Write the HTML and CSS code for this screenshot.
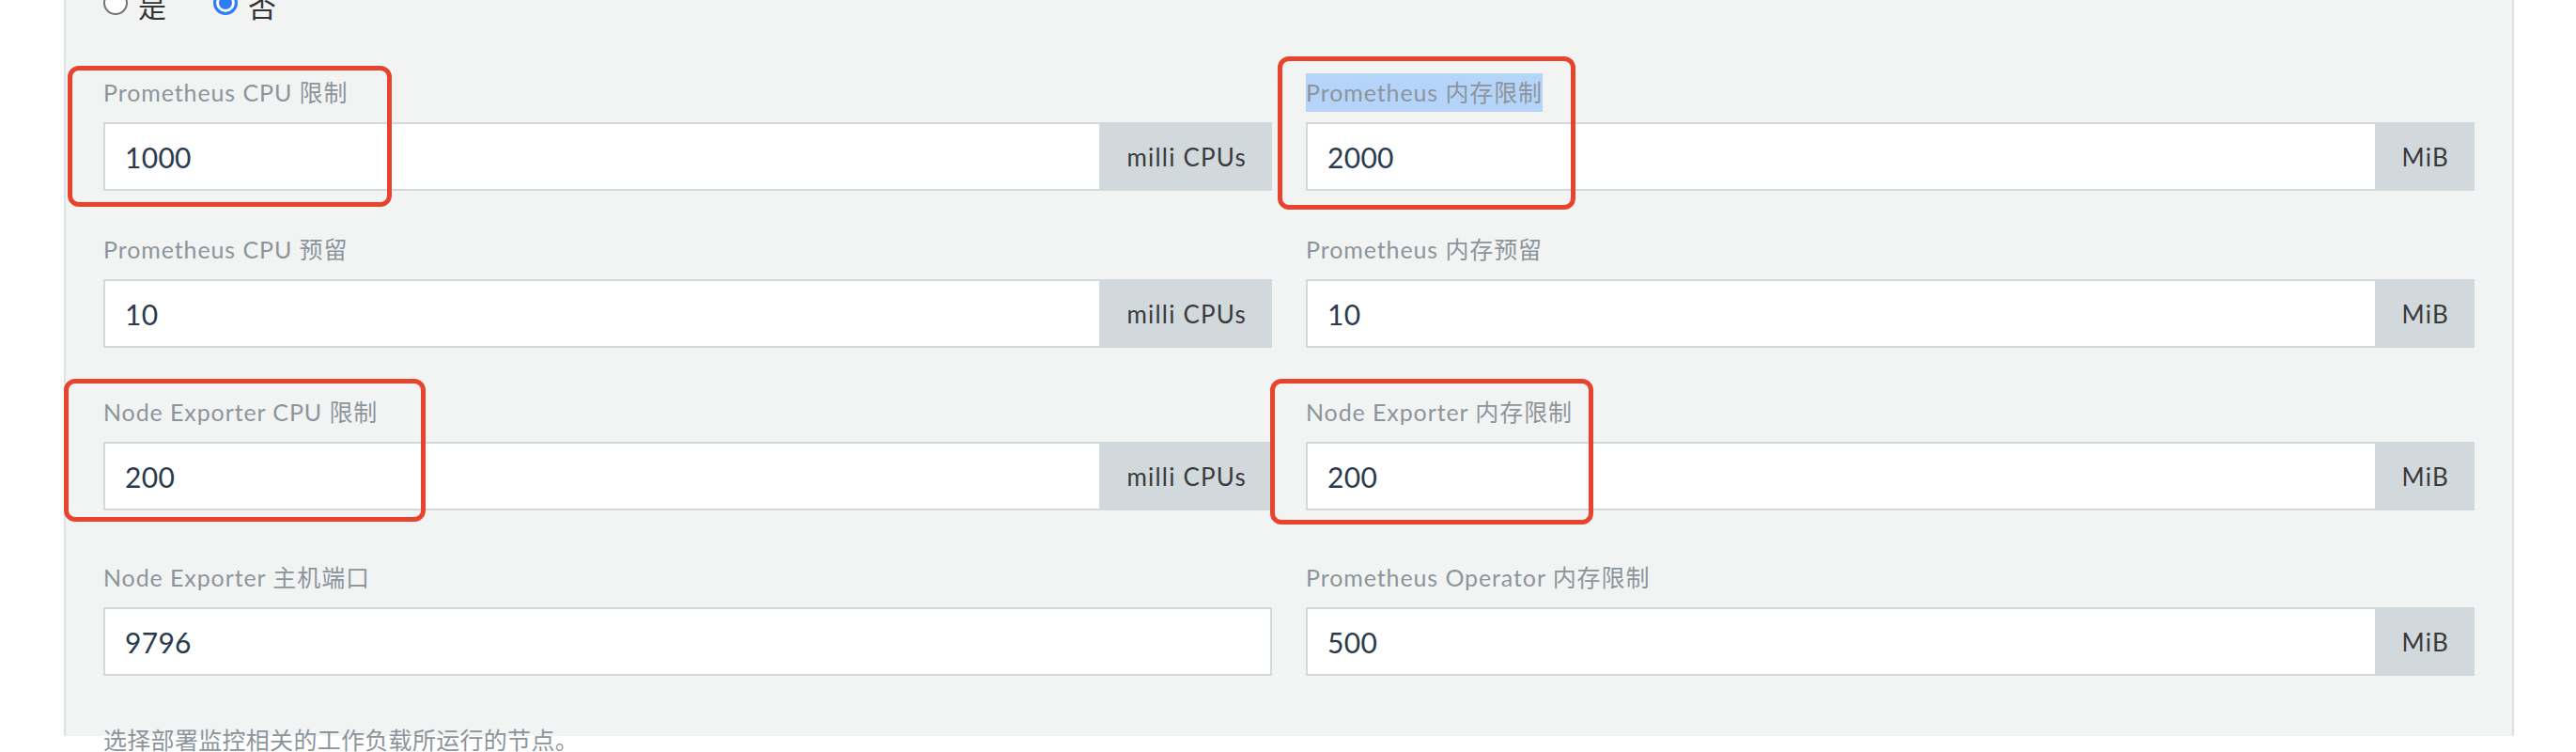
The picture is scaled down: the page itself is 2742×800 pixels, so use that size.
FILE: index.html
```html
<!DOCTYPE html>
<html lang="zh-CN">
<head>
<meta charset="utf-8">
<title>监控配置</title>
<link rel="stylesheet" href="styles.css">
</head>
<body>
<div class="page">
  <div class="panel">
    <div class="radio-row">
      <label class="radio"><span class="dot"></span><span class="radio-text">是</span></label>
      <label class="radio checked"><span class="dot"></span><span class="radio-text">否</span></label>
    </div>

    <div class="row row-1">
      <div class="field">
        <div class="label">Prometheus CPU 限制</div>
        <div class="input-group"><div class="input">1000</div><div class="addon">milli CPUs</div></div>
      </div>
      <div class="field">
        <div class="label"><span class="selected">Prometheus 内存限制</span></div>
        <div class="input-group"><div class="input">2000</div><div class="addon">MiB</div></div>
      </div>
    </div>

    <div class="row row-2">
      <div class="field">
        <div class="label">Prometheus CPU 预留</div>
        <div class="input-group"><div class="input">10</div><div class="addon">milli CPUs</div></div>
      </div>
      <div class="field">
        <div class="label">Prometheus 内存预留</div>
        <div class="input-group"><div class="input">10</div><div class="addon">MiB</div></div>
      </div>
    </div>

    <div class="row row-3">
      <div class="field">
        <div class="label">Node Exporter CPU 限制</div>
        <div class="input-group"><div class="input">200</div><div class="addon">milli CPUs</div></div>
      </div>
      <div class="field">
        <div class="label">Node Exporter 内存限制</div>
        <div class="input-group"><div class="input">200</div><div class="addon">MiB</div></div>
      </div>
    </div>

    <div class="row row-4">
      <div class="field">
        <div class="label">Node Exporter 主机端口</div>
        <div class="input-group"><div class="input">9796</div></div>
      </div>
      <div class="field">
        <div class="label">Prometheus Operator 内存限制</div>
        <div class="input-group"><div class="input">500</div><div class="addon">MiB</div></div>
      </div>
    </div>

    <p class="help">选择部署监控相关的工作负载所运行的节点。</p>
  </div>

  <div class="mark mark-1"></div>
  <div class="mark mark-2"></div>
  <div class="mark mark-3"></div>
  <div class="mark mark-4"></div>
</div>
</body>
</html>
```

FILE: styles.css
```css
html, body {
  margin: 0;
  padding: 0;
  background: #ffffff;
}

body {
  font-family: "Lato", "Noto Sans CJK SC", sans-serif;
  overflow: hidden;
}

.page {
  position: relative;
  width: 2742px;
  height: 800px;
  overflow: hidden;
}

.panel {
  margin-left: 68px;
  width: 2608px;
  height: 800px;
  box-sizing: border-box;
  background: #f2f4f4;
  border-left: 2px solid #dde2e5;
  border-right: 2px solid #dde2e5;
  padding: 0 40px;
}

/* radio buttons */
.radio-row {
  display: flex;
  align-items: center;
  height: 40px;
  margin-top: -17px;
  gap: 50px;
}

.radio {
  display: flex;
  align-items: center;
  gap: 11px;
  font-size: 30px;
  color: #333333;
}

.radio-text {
  padding-top: 4px;
}

.dot {
  width: 26px;
  height: 26px;
  box-sizing: border-box;
  border-radius: 50%;
  border: 2px solid #747474;
  background: #ffffff;
}

.radio.checked .dot {
  border: 3px solid #2f7df6;
  background: #2f7df6;
  box-shadow: inset 0 0 0 3px #ffffff;
}

/* form rows */
.row {
  display: grid;
  grid-template-columns: 1fr 1fr;
  column-gap: 36px;
}

.row-1 { margin-top: 55px; }
.row-2 { margin-top: 42px; }
.row-3 { margin-top: 48px; }
.row-4 { margin-top: 51px; }

.label {
  height: 41px;
  line-height: 41px;
  font-size: 25px;
  letter-spacing: 0.9px;
  color: #8d959b;
  margin-bottom: 11px;
  white-space: nowrap;
}

.selected {
  display: inline-block;
  height: 41px;
  background: #b4d4fa;
}

.input-group {
  display: flex;
  height: 73px;
}

.input {
  flex: 1;
  display: flex;
  align-items: center;
  box-sizing: border-box;
  background: #ffffff;
  border: 2px solid #d3dadd;
  padding-left: 21px;
  font-size: 30px;
  letter-spacing: 0.3px;
  color: #2a3a4d;
}

.addon {
  display: flex;
  align-items: center;
  padding: 0 27px;
  background: #d2d9dc;
  font-size: 26px;
  letter-spacing: 1.2px;
  color: #3a3a3a;
  white-space: nowrap;
}

.help {
  margin: 48px 0 0;
  line-height: 41px;
  font-size: 25px;
  letter-spacing: 0.3px;
  color: #8d959b;
}

/* annotation boxes drawn over the screenshot */
.mark {
  position: absolute;
  box-sizing: border-box;
  border: 5px solid #e8432c;
  border-radius: 12px;
}

.mark-1 { left: 72px;   top: 70px;  width: 345px; height: 150px; }
.mark-2 { left: 1360px; top: 60px;  width: 317px; height: 163px; }
.mark-3 { left: 68px;   top: 403px; width: 385px; height: 152px; }
.mark-4 { left: 1352px; top: 403px; width: 344px; height: 155px; }
```
